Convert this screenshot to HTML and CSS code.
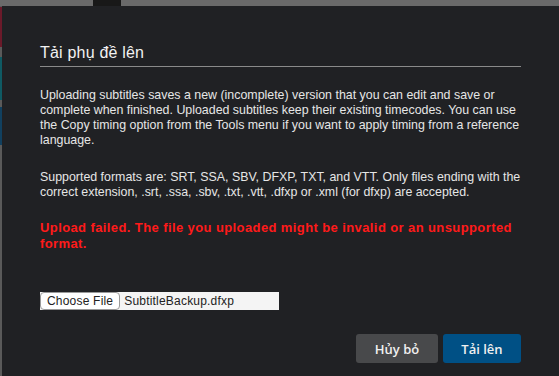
FILE: index.html
```html
<!DOCTYPE html>
<html lang="vi">
<head>
    <meta charset="UTF-8" />
    <title>Tải phụ đề lên</title>
    <link rel="stylesheet" href="styles.css">
</head>
<body>

<div class="topbar">
    <div class="topbar-tab"></div>
</div>

<div class="page">
    <div class="side-strip">
        <span class="strip red"></span>
        <span class="strip teal"></span>
        <span class="strip blue"></span>
    </div>

    <div class="dialog">
        <h2 class="dialog-title">Tải phụ đề lên</h2>

        <p class="info">Uploading subtitles saves a new (incomplete) version that you can edit and save or<br>
        complete when finished. Uploaded subtitles keep their existing timecodes. You can use<br>
        the Copy timing option from the Tools menu if you want to apply timing from a reference<br>
        language.</p>

        <p class="info">Supported formats are: SRT, SSA, SBV, DFXP, TXT, and VTT. Only files ending with the<br>
        correct extension, .srt, .ssa, .sbv, .txt, .vtt, .dfxp or .xml (for dfxp) are accepted.</p>

        <p class="error">Upload failed. The file you uploaded might be invalid or an unsupported<br>
        format.</p>

        <div class="file-field">
            <span class="file-btn">Choose File</span>
            <span class="file-name">SubtitleBackup.dfxp</span>
        </div>

        <div class="actions">
            <button class="btn btn-cancel">Hủy bỏ</button>
            <button class="btn btn-primary">Tải lên</button>
        </div>
    </div>
</div>

</body>
</html>
```

FILE: styles.css
```css
* {
  margin: 0;
  padding: 0;
  box-sizing: border-box;
}

body {
  background: #202124;
  font-family: 'Liberation Sans', Arial, sans-serif;
  height: 376px;
  overflow: hidden;
}

.topbar {
  height: 6px;
  background: #6a6a6a;
  display: flex;
}

.topbar-tab {
  width: 28px;
  margin-left: 93px;
  background: #181818;
}

.page {
  display: flex;
  height: 370px;
}

.side-strip {
  width: 2px;
  background: #5a5a5a;
  display: flex;
  flex-direction: column;
}

.strip {
  display: block;
}

.strip.red {
  height: 40px;
  margin-top: 1px;
  background: #6b1a2a;
}

.strip.teal {
  height: 43px;
  margin-top: 10px;
  background: #0f5a63;
}

.strip.blue {
  height: 38px;
  margin-top: 7px;
  background: #11405f;
}

.dialog {
  flex: 1;
  padding: 38px 38px 0 38px;
  color: #e6e6e6;
}

.dialog-title {
  font-size: 16px;
  font-weight: 400;
  color: #f2f2f2;
  letter-spacing: 0.2px;
  padding-bottom: 4px;
  border-bottom: 1px solid #8a8a8a;
  margin-bottom: 21px;
}

.info {
  font-size: 12.4px;
  line-height: 15px;
  margin-right: -20px;
}

.info + .info {
  margin-top: 22px;
}

.error {
  color: #ff1a1a;
  font-weight: 700;
  font-size: 13px;
  line-height: 16px;
  letter-spacing: 0.4px;
  margin-right: -20px;
  margin-top: 20px;
}

.file-field {
  margin-top: 40px;
  width: 239px;
  height: 18px;
  background: #f4f4f4;
  display: flex;
  align-items: center;
  font-size: 12px;
  letter-spacing: 0.2px;
  color: #222;
}

.file-btn {
  height: 18px;
  line-height: 16px;
  padding: 0 6px;
  background: #fff;
  border: 1px solid #9a9a9a;
  border-radius: 4px;
  margin-right: 4px;
}

.actions {
  display: flex;
  justify-content: flex-end;
  gap: 5px;
  margin-top: 24px;
}

.btn {
  height: 29px;
  border: none;
  border-radius: 3px;
  color: #f0f0f0;
  font-family: 'Open Sans', sans-serif;
  font-size: 13px;
  font-weight: 600;
}

.btn-cancel {
  width: 82px;
  background: #48494b;
}

.btn-primary {
  width: 78px;
  background: #005085;
}
```
